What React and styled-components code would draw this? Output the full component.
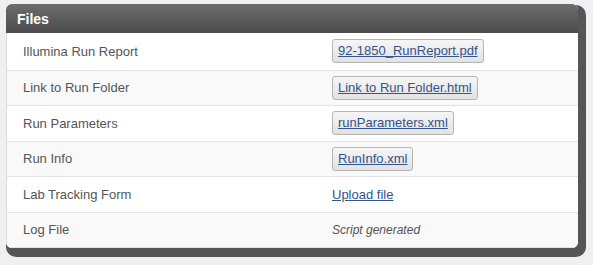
import styled, { createGlobalStyle } from "styled-components";

const Global = createGlobalStyle`
  body {
    margin: 0;
    background: #eef0f2;
    font-family: "Liberation Sans", Arial, sans-serif;
  }
`;

const Page = styled.div`
  padding: 4px 0 0 6px;
  height: 265px;
  box-sizing: border-box;
`;

const Panel = styled.div`
  width: 572px;
  border-radius: 6px;
  background: #fff;
  box-shadow: 4px 5px 0 4px #555;
  overflow: hidden;
`;

const Header = styled.div`
  height: 29px;
  display: flex;
  align-items: center;
  padding-left: 11px;
  background: linear-gradient(#6c6c6c, #4c4c4c);
  color: #fff;
  font-weight: bold;
  font-size: 14px;
`;

const Row = styled.div`
  display: grid;
  grid-template-columns: 317px 1fr;
  align-items: center;
  height: ${(p) => (p.$first ? "37.7px" : "35.5px")};
  box-sizing: border-box;
  border-bottom: 1px solid #e3e3e3;
  border-left: 1px solid #dcdcdc;
  background: ${(p) => (p.$striped ? "#f9f9f9" : "#fff")};
`;

const Label = styled.div`
  padding-left: 16px;
  font-size: 13px;
  color: #555;
`;

const Value = styled.div`
  padding-left: 8px;
  font-size: 13px;
  color: #555;
`;

const FileButton = styled.a`
  display: inline-block;
  padding: 3px 5px 4px;
  border: 1px solid #b5b5b5;
  border-radius: 3px;
  background: linear-gradient(#f6f6f6, #e2e2e2);
  color: #33548c;
  text-decoration: underline;
  font-size: 13px;
  line-height: 15px;
`;

const PlainLink = styled.a`
  color: #33548c;
  text-decoration: underline;
  font-size: 13px;
`;

const Note = styled.span`
  font-style: italic;
  font-size: 12px;
  color: #555;
`;

const rows = [
  { label: "Illumina Run Report", file: "92-1850_RunReport.pdf" },
  { label: "Link to Run Folder", file: "Link to Run Folder.html" },
  { label: "Run Parameters", file: "runParameters.xml" },
  { label: "Run Info", file: "RunInfo.xml" },
  { label: "Lab Tracking Form", link: "Upload file" },
  { label: "Log File", note: "Script generated" },
];

export default function App() {
  return (
    <Page>
      <Global />
      <Panel>
        <Header>Files</Header>
        {rows.map((r, i) => (
          <Row key={r.label} $first={i === 0} $striped={i % 2 === 1}>
            <Label>{r.label}</Label>
            <Value>
              {r.file && <FileButton>{r.file}</FileButton>}
              {r.link && <PlainLink>{r.link}</PlainLink>}
              {r.note && <Note>{r.note}</Note>}
            </Value>
          </Row>
        ))}
      </Panel>
    </Page>
  );
}
